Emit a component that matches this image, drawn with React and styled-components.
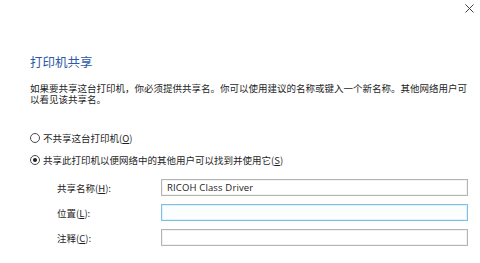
import React from "react";
import styled, { createGlobalStyle } from "styled-components";

const Global = createGlobalStyle`
  html, body { margin: 0; padding: 0; background: #fff; }
  body {
    font-family: "Microsoft YaHei", "Noto Sans CJK SC", "Noto Sans", sans-serif;
    color: #1f1f1f;
  }
`;

const Dialog = styled.div`
  width: 480px;
  height: 263px;
  background: #fff;
  overflow: hidden;
  display: flex;
  flex-direction: column;
`;

const TitleBar = styled.div`
  height: 18px;
  display: flex;
  justify-content: flex-end;
  align-items: center;
  padding-right: 5px;
`;

const CloseButton = styled.button`
  width: 12px;
  height: 12px;
  padding: 0;
  border: none;
  background: transparent;
  display: flex;
  align-items: center;
  justify-content: center;
  margin-top: -2px;
`;

const Content = styled.div`
  padding-left: 30px;
  display: flex;
  flex-direction: column;
`;

const Heading = styled.div`
  margin-top: 36px;
  font-size: 12.5px;
  line-height: 16px;
  color: #2c5aa8;
`;

const Description = styled.p`
  margin: 12.5px 0 0 0;
  font-size: 9.5px;
  line-height: 11px;
  width: 440px;
  color: #1e1e1e;
`;

const RadioRow = styled.label`
  display: flex;
  align-items: center;
  height: 16px;
  margin-top: ${(p) => p.$gap}px;
  font-size: 9.5px;
  color: #1e1e1e;
`;

const RadioCircle = styled.span`
  width: 10px;
  height: 10px;
  border: 1px solid #4a4a4a;
  border-radius: 50%;
  box-sizing: border-box;
  display: flex;
  align-items: center;
  justify-content: center;
  margin-right: 3px;
  background: #fff;
  &::after {
    content: "";
    width: 4px;
    height: 4px;
    border-radius: 50%;
    background: ${(p) => (p.$checked ? "#222" : "transparent")};
  }
`;

const Key = styled.span`
  text-decoration: underline;
`;

const Form = styled.div`
  margin-top: 11px;
  padding-left: 27px;
  display: grid;
  grid-template-columns: 104px 307px;
  row-gap: 8px;
  align-items: center;
`;

const FieldLabel = styled.span`
  font-size: 9.5px;
  color: #1e1e1e;
`;

const Field = styled.div`
  height: 17px;
  box-sizing: border-box;
  border: 1px solid ${(p) => (p.$focused ? "#7fbfe2" : "#b4b4b4")};
  background: ${(p) => (p.$focused ? "#fbfeff" : "#fff")};
  box-shadow: ${(p) =>
    p.$focused ? "inset 0 0 0 1px #e3f2fa" : "inset 0 0 0 1px #f2f2f2"};
  display: flex;
  align-items: center;
  padding-left: 5px;
  font-family: "Segoe UI", "Open Sans", "Noto Sans", sans-serif;
  font-size: 9.5px;
  color: #222;
  letter-spacing: 0.15px;
`;

export default function App() {
  return (
    <>
      <Global />
      <Dialog>
        <TitleBar>
          <CloseButton aria-label="关闭">
            <svg width="9" height="9" viewBox="0 0 9 9">
              <path d="M0.5 0.5 L8.5 8.5 M8.5 0.5 L0.5 8.5" stroke="#444" strokeWidth="1" />
            </svg>
          </CloseButton>
        </TitleBar>
        <Content>
          <Heading>打印机共享</Heading>
          <Description>
            如果要共享这台打印机，你必须提供共享名。你可以使用建议的名称或键入一个新名称。其他网络用户可以看见该共享名。
          </Description>
          <RadioRow $gap={25.5}>
            <RadioCircle />
            不共享这台打印机(<Key>O</Key>)
          </RadioRow>
          <RadioRow $gap={6}>
            <RadioCircle $checked />
            共享此打印机以便网络中的其他用户可以找到并使用它(<Key>S</Key>)
          </RadioRow>
          <Form>
            <FieldLabel>
              共享名称(<Key>H</Key>):
            </FieldLabel>
            <Field>RICOH Class Driver</Field>
            <FieldLabel>
              位置(<Key>L</Key>):
            </FieldLabel>
            <Field $focused />
            <FieldLabel>
              注释(<Key>C</Key>):
            </FieldLabel>
            <Field />
          </Form>
        </Content>
      </Dialog>
    </>
  );
}
